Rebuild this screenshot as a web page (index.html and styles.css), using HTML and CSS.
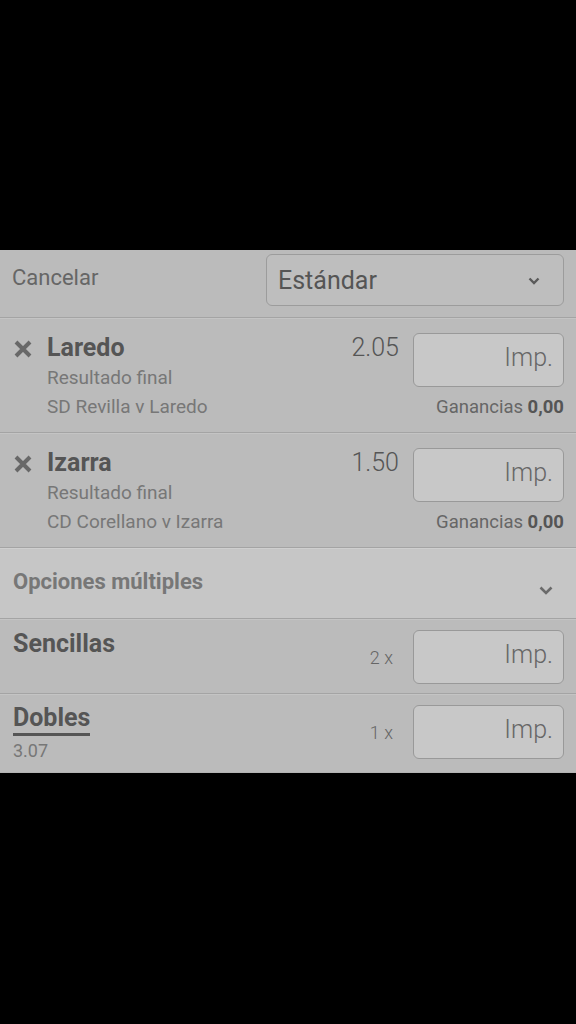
FILE: index.html
```html
<!DOCTYPE html>
<html lang="es">
<head>
<meta charset="utf-8">
<title>Boleto</title>
<link rel="stylesheet" href="styles.css">
</head>
<body>
<div class="sheet">
  <div class="header">
    <span class="cancel">Cancelar</span>
    <div class="select">
      <span>Estándar</span>
      <svg class="chev" width="12" height="8" viewBox="0 0 12 8"><path d="M1.5 1.5 L6 6 L10.5 1.5" fill="none" stroke="#5a5a5a" stroke-width="2.4"/></svg>
    </div>
  </div>

  <div class="bet">
    <div class="bet-left">
      <svg class="x" width="20" height="18" viewBox="0 0 20 18"><path d="M3 2 L17 16 M17 2 L3 16" stroke="#686868" stroke-width="4" fill="none"/></svg>
      <div class="bet-info">
        <div class="sel">Laredo</div>
        <div class="market">Resultado final</div>
        <div class="event">SD Revilla v Laredo</div>
      </div>
    </div>
    <div class="bet-right">
      <div class="stake-line">
        <span class="odds">2.05</span>
        <div class="stake">Imp.</div>
      </div>
      <div class="win">Ganancias <b>0,00</b></div>
    </div>
  </div>

  <div class="bet">
    <div class="bet-left">
      <svg class="x" width="20" height="18" viewBox="0 0 20 18"><path d="M3 2 L17 16 M17 2 L3 16" stroke="#686868" stroke-width="4" fill="none"/></svg>
      <div class="bet-info">
        <div class="sel">Izarra</div>
        <div class="market">Resultado final</div>
        <div class="event">CD Corellano v Izarra</div>
      </div>
    </div>
    <div class="bet-right">
      <div class="stake-line">
        <span class="odds">1.50</span>
        <div class="stake">Imp.</div>
      </div>
      <div class="win">Ganancias <b>0,00</b></div>
    </div>
  </div>

  <div class="multi">
    <span class="multi-title">Opciones múltiples</span>
    <svg class="chev2" width="14" height="9" viewBox="0 0 14 9"><path d="M1.5 1.5 L7 7 L12.5 1.5" fill="none" stroke="#6a6a6a" stroke-width="2.6"/></svg>
  </div>

  <div class="combo combo-single">
    <div class="combo-left">
      <div class="combo-name">Sencillas</div>
    </div>
    <div class="combo-right">
      <span class="count">2 x</span>
      <div class="stake">Imp.</div>
    </div>
  </div>

  <div class="combo combo-double">
    <div class="combo-left">
      <div class="combo-name"><span class="ul">Dobles</span></div>
      <div class="combo-odds">3.07</div>
    </div>
    <div class="combo-right">
      <span class="count">1 x</span>
      <div class="stake">Imp.</div>
    </div>
  </div>
</div>
</body>
</html>
```

FILE: styles.css
```css
html, body {
  margin: 0;
  padding: 0;
  background: #000;
  height: 100%;
}
body {
  font-family: Roboto, "Liberation Sans", sans-serif;
}
.sheet {
  margin-top: 250px;
  background: #bbbbbb;
  width: 576px;
}
.header {
  display: flex;
  justify-content: space-between;
  align-items: flex-start;
  padding: 4px 12px 11px 12px;
  border-bottom: 1px solid #a4a4a4;
}
.cancel {
  margin-top: 12px;
  font-size: 22px;
  line-height: 24px;
  color: #666;
}
.select {
  box-sizing: border-box;
  width: 298px;
  height: 52px;
  border: 1.5px solid #9c9c9c;
  border-radius: 6px;
  background: #bebebe;
  display: flex;
  align-items: center;
  justify-content: space-between;
  padding: 0 23px 0 11px;
  font-size: 25px;
  color: #555;
}
.chev { margin-top: 2px; }

.bet {
  display: flex;
  justify-content: space-between;
  padding: 14px 12px 10px 13px;
  border-top: 1px solid #c4c4c4;
  border-bottom: 1px solid #a4a4a4;
}
.bet-left {
  display: flex;
  align-items: flex-start;
  gap: 14px;
}
.x { margin-top: 7px; }
.sel {
  font-size: 25px;
  font-weight: bold;
  line-height: 30px;
  color: #555;
}
.market, .event {
  font-size: 19px;
  line-height: 29px;
  color: #777;
}
.event { line-height: 30px; }
.bet-right {
  display: flex;
  flex-direction: column;
  align-items: flex-end;
}
.stake-line {
  display: flex;
  align-items: flex-start;
  gap: 14px;
}
.odds {
  font-size: 25px;
  font-weight: 300;
  line-height: 30px;
  color: #555;
}
.stake {
  box-sizing: border-box;
  width: 151px;
  height: 54px;
  border: 1.5px solid #999;
  border-radius: 6px;
  background: #c8c8c8;
  font-size: 25px;
  color: #666;
  font-weight: 300;
  text-align: right;
  padding: 9px 10px 0 0;
  line-height: 30px;
}
.win {
  margin-top: 8px;
  font-size: 18.5px;
  line-height: 24px;
  color: #666;
}
.win b { color: #555; }

.multi {
  display: flex;
  justify-content: space-between;
  align-items: center;
  background: #c6c6c6;
  border-top: 1px solid #cfcfcf;
  border-bottom: 1px solid #a4a4a4;
  height: 71px;
  padding: 0 23px 0 13px;
  box-sizing: border-box;
}
.multi-title {
  font-size: 22px;
  font-weight: bold;
  color: #777;
  margin-top: -5px;
}
.chev2 { margin-top: 14px; }

.combo {
  display: flex;
  justify-content: space-between;
  align-items: flex-start;
  border-top: 1px solid #c4c4c4;
  border-bottom: 1px solid #a4a4a4;
  padding: 10px 12px 9px 13px;
}
.combo-double { padding-bottom: 13px; border-bottom: 1px solid #b3b3b3; }
.combo-left { height: 54px; }
.combo-name {
  font-size: 25px;
  font-weight: bold;
  color: #555;
  line-height: 28px;
}
.combo-double .combo-name {
  display: flex;
}
.ul {
  display: block;
  border-bottom: 3px solid #555;
  line-height: 26px;
  padding-bottom: 2px;
}
.combo-odds {
  font-size: 18px;
  color: #777;
  line-height: 22px;
  margin-top: 4px;
}
.combo-right {
  display: flex;
  align-items: center;
  gap: 20px;
}
.count {
  font-size: 18px;
  color: #666;
  font-weight: 300;
}
```
